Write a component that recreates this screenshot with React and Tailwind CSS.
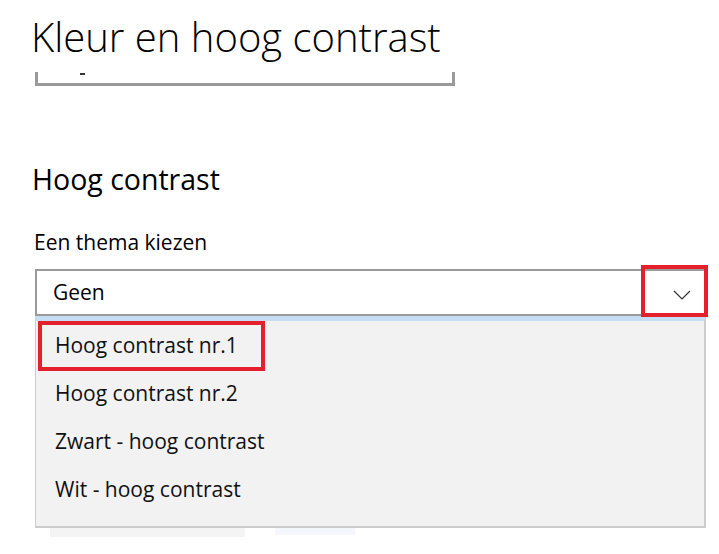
const items = ['Hoog contrast nr.1', 'Hoog contrast nr.2', 'Zwart - hoog contrast', 'Wit - hoog contrast'];

export default function App() {
  return (
    <div
      className="relative h-[554px] w-[719px] overflow-hidden bg-white text-black"
      style={{ fontFamily: '"Open Sans", "Noto Sans", sans-serif' }}
    >
      {/* Page title */}
      <h1 className="pl-[31px] pt-[12px] text-[40px] font-light leading-[50px]">
        Kleur en hoog contrast
      </h1>

      {/* Bottom of a cut-off field from the section above */}
      <div className="relative ml-[35px] mt-[10px] h-[14px] w-[420px] border-x-[3px] border-b-[3px] border-[#9a9a9a]">
        <span className="absolute left-[42px] top-[1px] h-[2px] w-[5px] bg-[#333]" />
      </div>

      {/* Section heading */}
      <h2 className="mt-[75px] pl-[32px] text-[28.5px] font-normal leading-[36px]">Hoog contrast</h2>

      <div className="mt-[32px] pl-[34px] text-[21px] leading-[26px]">Een thema kiezen</div>

      {/* Combobox, opened */}
      <div className="relative ml-[35px] mt-[14px] w-[671px]">
        <div className="flex h-[47px] items-center border-2 border-[#9a9a9a] bg-white pl-[16px] text-[21px]">
          <span>Geen</span>
          <span className="ml-auto mr-[13px] mt-[4px] flex items-center">
            <svg width="18" height="10" viewBox="0 0 18 10" fill="none">
              <path d="M1 1L9 9L17 1" stroke="#333" strokeWidth="1.2" />
            </svg>
          </span>
        </div>

        <div className="border-b-2 border-l border-r-2 border-[#cccccc] border-t-[5px] border-t-[#c6def4] bg-[#f2f2f2] pb-[12px] pt-[1px]">
          {items.map((label) => (
            <div key={label} className="flex h-[48px] items-center pl-[19px] text-[21px] text-[#111]">
              {label}
            </div>
          ))}
        </div>

        {/* Red annotation frames */}
        <div className="pointer-events-none absolute left-[606px] top-[-4px] h-[52px] w-[67px] border-4 border-[#e3202b]" />
        <div className="pointer-events-none absolute left-[3px] top-[52px] h-[50px] w-[227px] border-4 border-[#e3202b]" />
      </div>

      {/* Content peeking out below the list */}
      <div className="ml-[50px] flex h-[10px] items-start gap-[30px]">
        <div className="h-[9px] w-[195px] bg-[#f4f4f4]" />
        <div className="h-[7px] w-[80px] bg-[#f4f8fd]" />
      </div>
    </div>
  );
}
